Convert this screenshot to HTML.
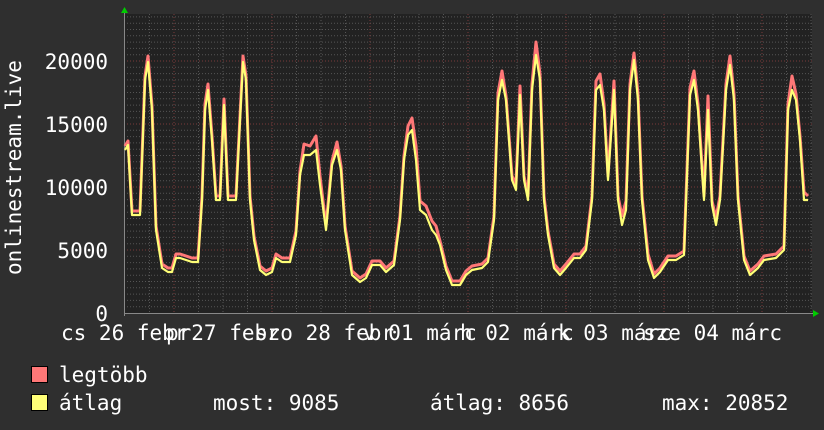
<!DOCTYPE html>
<html><head><meta charset="utf-8"><style>
html,body{margin:0;padding:0;background:#2f2f2f;}
svg{display:block}
text{font-family:"DejaVu Sans Mono","Liberation Mono",monospace;fill:#fff;font-size:21px}
</style></head><body>
<svg width="824" height="430" viewBox="0 0 824 430" xmlns="http://www.w3.org/2000/svg">
<rect width="824" height="430" fill="#2f2f2f"/>
<rect x="124" y="14" width="688" height="299" fill="#222"/>
<g stroke="#555" stroke-width="1" stroke-dasharray="1,2">
<path d="M124 306.7H812M124 300.4H812M124 294.1H812M124 287.8H812M124 281.5H812M124 275.2H812M124 268.9H812M124 262.6H812M124 256.3H812M124 243.7H812M124 237.4H812M124 231.1H812M124 224.8H812M124 218.5H812M124 212.2H812M124 205.9H812M124 199.6H812M124 193.3H812M124 180.7H812M124 174.4H812M124 168.1H812M124 161.8H812M124 155.5H812M124 149.2H812M124 142.9H812M124 136.6H812M124 130.3H812M124 117.7H812M124 111.4H812M124 105.1H812M124 98.8H812M124 92.5H812M124 86.2H812M124 79.9H812M124 73.6H812M124 67.3H812M124 54.7H812M124 48.4H812M124 42.1H812M124 35.8H812M124 29.5H812M124 23.2H812M124 16.9H812"/>
<path d="M149.5 14V313M198.5 14V313M223 14V313M247.5 14V313M296.5 14V313M321 14V313M345.5 14V313M394.5 14V313M419 14V313M443.5 14V313M492.5 14V313M517 14V313M541.5 14V313M590.5 14V313M615 14V313M639.5 14V313M688.5 14V313M713 14V313M737.5 14V313M786.5 14V313M811 14V313"/>
</g>
<g stroke="#7a3a3a" stroke-width="1" stroke-dasharray="1,2">
<path d="M124 250H812M124 187H812M124 124H812M124 61H812"/>
<path d="M174 14V313M272 14V313M370 14V313M468 14V313M566 14V313M664 14V313M762 14V313"/>
</g>
<line x1="124" y1="313.5" x2="814" y2="313.5" stroke="#888"/>
<line x1="124.5" y1="12" x2="124.5" y2="316" stroke="#888"/>
<path d="M121 13L124.5 7L128 13Z" fill="#0c0"/>
<path d="M813 310L819 313.5L813 317Z" fill="#0c0"/>
<g fill="none" stroke-linejoin="round">
<polyline transform="translate(0,-4)" stroke="#ff7777" stroke-width="3" points="125,150 128,145 132,215 140,215 145,80 148,60 152,110 156,230 162,268 168,272 172,272 176,258 180,258 192,262 198,262 202,200 205,108 208,88 212,140 216,200 220,200 224,103 228,200 236,200 240,120 243,60 246,80 250,200 254,240 260,270 266,275 272,272 276,258 282,262 290,262 296,235 300,175 304,148 310,150 316,140 320,180 326,230 332,165 337,146 341,170 345,230 352,275 360,282 366,278 372,265 380,265 386,272 394,265 400,220 404,160 408,130 412,122 416,150 420,205 426,210 432,225 436,230 440,245 446,270 452,285 460,285 466,275 472,270 482,268 488,262 494,220 498,97 502,75 506,100 512,180 516,188 520,90 524,180 528,200 532,88 536,46 540,78 544,200 548,235 554,268 560,275 566,268 574,258 580,258 586,250 592,200 596,85 600,78 604,108 608,180 614,85 618,200 622,220 626,205 630,88 634,57 638,98 642,200 648,258 654,278 660,272 668,260 676,260 684,255 690,92 694,75 698,108 704,200 708,100 712,205 716,222 720,200 726,88 730,60 734,98 738,200 744,260 750,275 758,268 764,260 776,258 784,250 788,108 792,80 796,98 800,140 804,196 808,200"/>
<polyline stroke="#ffff77" stroke-width="2.2" points="125,150 128,145 132,215 140,215 145,80 148,62 152,110 156,230 162,268 168,272 172,272 176,258 180,258 192,262 198,262 202,200 205,110 208,90 212,140 216,200 220,200 224,105 228,200 236,200 240,120 243,62 246,80 250,200 254,240 260,270 266,275 272,272 276,258 282,262 290,262 296,235 300,175 304,155 310,155 316,150 320,185 326,230 332,165 337,150 341,170 345,230 352,275 360,282 366,278 372,265 380,265 386,272 394,265 400,220 404,160 408,135 412,130 416,160 420,210 426,215 432,230 436,235 440,245 446,270 452,285 460,285 466,275 472,270 482,268 488,262 494,220 498,100 502,80 506,100 512,180 516,190 520,95 524,180 528,200 532,90 536,55 540,80 544,200 548,235 554,268 560,275 566,268 574,258 580,258 586,250 592,200 596,90 600,85 604,110 608,180 614,90 618,200 622,225 626,210 630,90 634,60 638,100 642,200 648,260 654,278 660,272 668,260 676,260 684,255 690,95 694,80 698,110 704,200 708,110 712,205 716,225 720,200 726,90 730,65 734,100 738,200 744,260 750,275 758,268 764,260 776,258 784,250 788,110 792,90 796,100 800,140 804,200 808,200"/>
</g>
<g text-anchor="end">
<text x="108" y="69">20000</text>
<text x="108" y="132">15000</text>
<text x="108" y="195">10000</text>
<text x="108" y="258">5000</text>
<text x="108" y="321">0</text>
</g>
<text transform="translate(21,275) rotate(-90)">onlinestream.live</text>
<text x="61" y="340">cs 26 febr</text>
<text x="166" y="340">pr27 febr</text>
<text x="255" y="340">szo 28 febr</text>
<text x="363" y="340">v 01 márc</text>
<text x="460" y="340">h 02 márc</text>
<text x="558" y="340">k 03 márc</text>
<text x="643" y="340">sze 04 márc</text>
<rect x="31.5" y="366.5" width="16" height="16" fill="#ff7777" stroke="#000"/>
<rect x="31.5" y="394.5" width="16" height="16" fill="#ffff77" stroke="#000"/>
<text x="59" y="382">legtöbb</text>
<text x="59" y="410">átlag</text>
<text x="213" y="410">most: 9085</text>
<text x="430" y="410">átlag: 8656</text>
<text x="662" y="410">max: 20852</text>
</svg>
</body></html>
